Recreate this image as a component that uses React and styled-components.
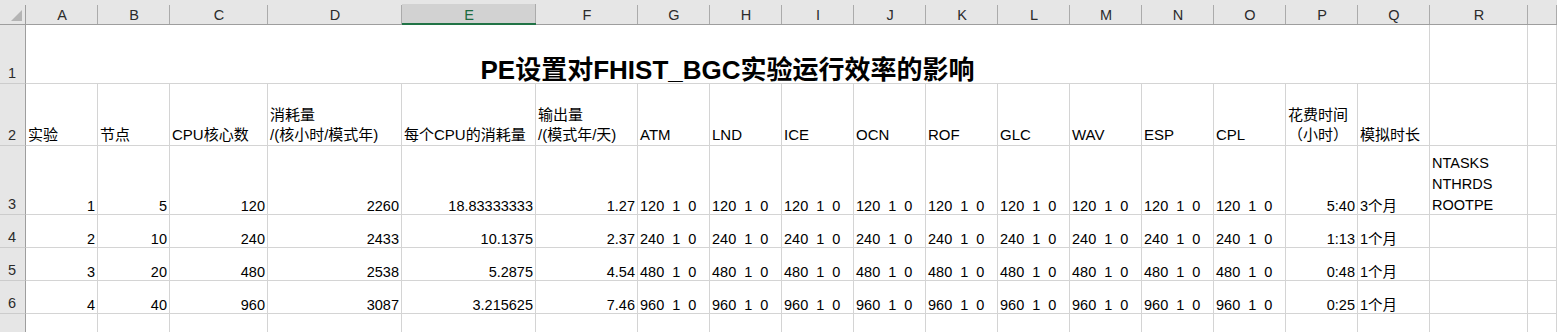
import React from 'react';
import styled, { createGlobalStyle } from 'styled-components';

const GlobalStyle = createGlobalStyle`
  html, body {
    margin: 0;
    padding: 0;
    background: #ffffff;
  }
  body {
    overflow: hidden;
    font-family: "Liberation Sans", "Noto Sans CJK SC", sans-serif;
  }
`;

const COLUMNS = [
  { id: 'A', w: 72 },
  { id: 'B', w: 72 },
  { id: 'C', w: 98 },
  { id: 'D', w: 134 },
  { id: 'E', w: 134, selected: true },
  { id: 'F', w: 102 },
  { id: 'G', w: 72 },
  { id: 'H', w: 72 },
  { id: 'I', w: 72 },
  { id: 'J', w: 72 },
  { id: 'K', w: 72 },
  { id: 'L', w: 72 },
  { id: 'M', w: 72 },
  { id: 'N', w: 72 },
  { id: 'O', w: 72 },
  { id: 'P', w: 72 },
  { id: 'Q', w: 72 },
  { id: 'R', w: 98 },
  { id: '', w: null },
];

// row 7 is taller than the visible area, so its label sits below the fold
const ROW_HEIGHTS = [59, 62, 69, 33, 33, 33, 44];

const GRID = '#d4d4d4';
const HEAD_BG = '#e6e6e6';
const HEAD_LINE = '#ababab';
const HEAD_EDGE = '#9e9e9e';

const Sheet = styled.div`
  display: grid;
  grid-template-columns: 26px ${COLUMNS.map((c) => (c.w ? `${c.w}px` : '1fr')).join(' ')};
  grid-template-rows: 25px ${ROW_HEIGHTS.map((h) => `${h}px`).join(' ')};
  width: 1557px;
  height: 332px;
  overflow: hidden;
  background: #ffffff;
  color: #000000;
`;

const Corner = styled.div`
  box-sizing: border-box;
  background:
    linear-gradient(${HEAD_EDGE}, ${HEAD_EDGE}) right bottom / 1px 19px no-repeat,
    ${HEAD_BG};
  border-bottom: 1px solid ${HEAD_EDGE};
  display: flex;
  align-items: flex-end;
  justify-content: flex-end;
  padding: 0 3px 2px 0;
`;

const ColHead = styled.div`
  box-sizing: border-box;
  padding-top: 6px;
  display: flex;
  align-items: center;
  justify-content: center;
  font-size: 14.5px;
  line-height: 16px;
  color: ${(p) => (p.$selected ? '#1d6b40' : '#2b2b2b')};
  background:
    linear-gradient(${HEAD_LINE}, ${HEAD_LINE}) right bottom / 1px 19px no-repeat,
    ${(p) => (p.$selected ? 'linear-gradient(#d2d2d2, #d2d2d2) left bottom / 100% 19px no-repeat,' : '')}
    ${HEAD_BG};
  border-bottom: ${(p) => (p.$selected ? '2px solid #217346' : `1px solid ${HEAD_EDGE}`)};
`;

const RowHead = styled.div`
  box-sizing: border-box;
  background: ${HEAD_BG};
  border-right: 1px solid ${HEAD_EDGE};
  border-bottom: 1px solid #cccccc;
  display: flex;
  align-items: flex-end;
  padding: 0 0 2px 8px;
  font-size: 14.5px;
  line-height: 16px;
  color: #2b2b2b;
`;

const Cell = styled.div`
  box-sizing: border-box;
  grid-column: span ${(p) => p.$span || 1};
  border-right: 1px solid ${GRID};
  border-bottom: 1px solid ${GRID};
  display: flex;
  flex-direction: column;
  justify-content: flex-end;
  align-items: ${(p) =>
    p.$align === 'right' ? 'flex-end' : p.$align === 'center' ? 'center' : 'flex-start'};
  padding: 0 2px;
  min-width: 0;
  font-size: 14.5px;
  line-height: 16px;
  white-space: pre;
`;

const Title = styled.span`
  display: block;
  font-size: 26px;
  line-height: 26px;
  font-weight: 700;
`;

const HeadText = styled.span`
  display: block;
  font-size: 15px;
  line-height: 20px;
  white-space: pre;
`;

const Lines = styled.span`
  display: block;
  line-height: ${(p) => p.$lh}px;
  margin-bottom: ${(p) => p.$mb || 0}px;
  white-space: pre;
`;

const CornerMark = () => (
  <svg width="12" height="12" viewBox="0 0 12 12">
    <polygon points="11,0 11,11 0,11" fill="#b4b4b4" />
  </svg>
);

const HEADERS = [
  '实验',
  '节点',
  'CPU核心数',
  '消耗量\n/(核小时/模式年)',
  '每个CPU的消耗量',
  '输出量\n/(模式年/天)',
  'ATM',
  'LND',
  'ICE',
  'OCN',
  'ROF',
  'GLC',
  'WAV',
  'ESP',
  'CPL',
  '花费时间\n（小时）',
  '模拟时长',
  '',
  '',
];

const RUNS = [
  { id: 1, nodes: 5, cores: 120, cost: 2260, perCpu: '18.83333333', out: '1.27', time: '5:40', span: '3个月' },
  { id: 2, nodes: 10, cores: 240, cost: 2433, perCpu: '10.1375', out: '2.37', time: '1:13', span: '1个月' },
  { id: 3, nodes: 20, cores: 480, cost: 2538, perCpu: '5.2875', out: '4.54', time: '0:48', span: '1个月' },
  { id: 4, nodes: 40, cores: 960, cost: 3087, perCpu: '3.215625', out: '7.46', time: '0:25', span: '1个月' },
];

const COMPONENTS = 9; // ATM .. CPL

function RunRow({ run, index }) {
  const pe = `${run.cores}  1  0`;
  return (
    <>
      <RowHead>{index + 3}</RowHead>
      <Cell $align="right">{run.id}</Cell>
      <Cell $align="right">{run.nodes}</Cell>
      <Cell $align="right">{run.cores}</Cell>
      <Cell $align="right">{run.cost}</Cell>
      <Cell $align="right">{run.perCpu}</Cell>
      <Cell $align="right">{run.out}</Cell>
      {Array.from({ length: COMPONENTS }, (_, i) => (
        <Cell key={i}>{pe}</Cell>
      ))}
      <Cell $align="right">{run.time}</Cell>
      <Cell>{run.span}</Cell>
      <Cell>
        {index === 0 ? (
          <Lines $lh={21} $mb={-2}>
            {'NTASKS\nNTHRDS\nROOTPE'}
          </Lines>
        ) : null}
      </Cell>
      <Cell />
    </>
  );
}

export default function App() {
  return (
    <>
      <GlobalStyle />
      <Sheet>
        <Corner>
          <CornerMark />
        </Corner>
        {COLUMNS.map((c, i) => (
          <ColHead key={i} $selected={c.selected}>
            {c.id}
          </ColHead>
        ))}

        <RowHead>1</RowHead>
        <Cell $span={17} $align="center">
          <Title>PE设置对FHIST_BGC实验运行效率的影响</Title>
        </Cell>
        <Cell />
        <Cell />

        <RowHead>2</RowHead>
        {HEADERS.map((h, i) => (
          <Cell key={i}>
            <HeadText>{h}</HeadText>
          </Cell>
        ))}

        {RUNS.map((run, i) => (
          <RunRow key={run.id} run={run} index={i} />
        ))}

        <RowHead />
        {COLUMNS.map((c, i) => (
          <Cell key={i} />
        ))}
      </Sheet>
    </>
  );
}
